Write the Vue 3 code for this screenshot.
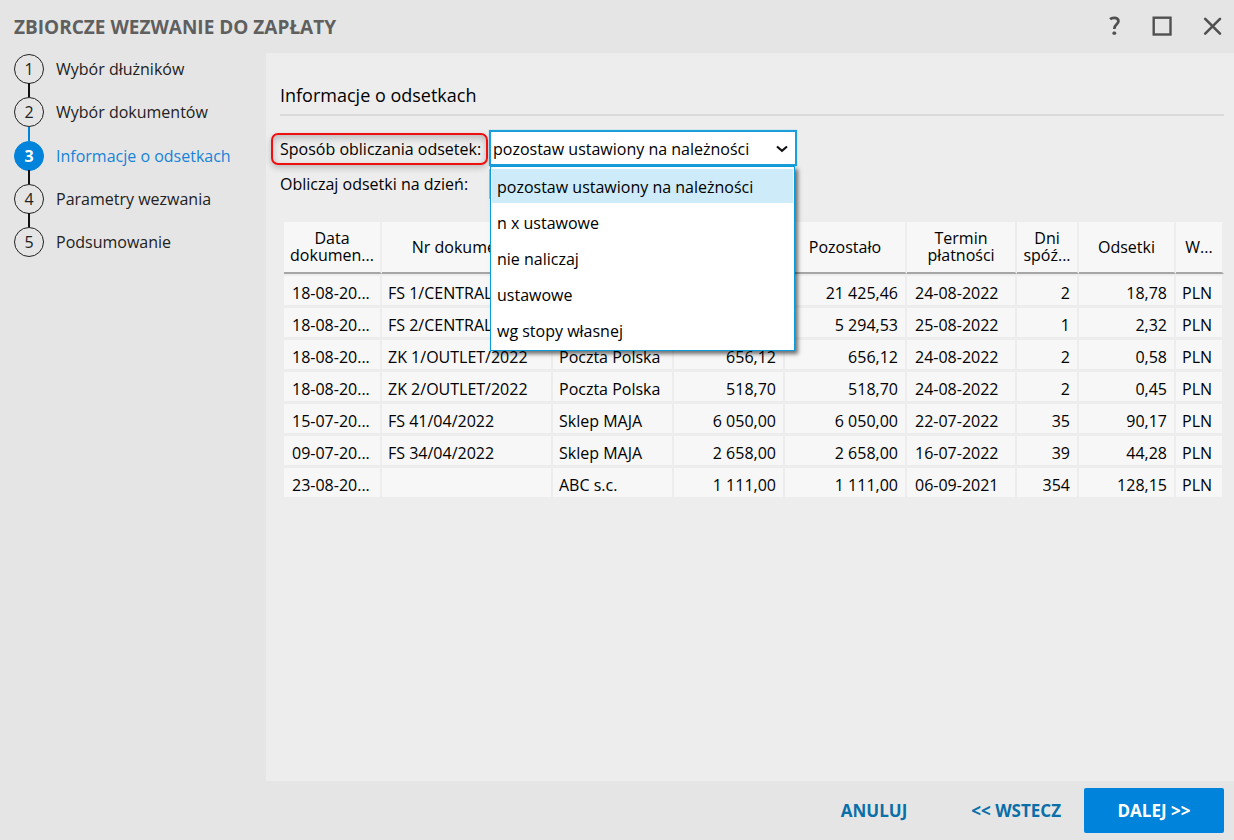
<script setup>
import { ref } from 'vue'

const steps = ['Wybór dłużników', 'Wybór dokumentów', 'Informacje o odsetkach', 'Parametry wezwania', 'Podsumowanie']
const active = 2

const options = ['pozostaw ustawiony na należności', 'n x ustawowe', 'nie naliczaj', 'ustawowe', 'wg stopy własnej']
const method = ref(options[0])
const open = ref(true)

function choose(option) {
  method.value = option
  open.value = false
}

const columns = [
  { key: 'date', title: ['Data', 'dokumen...'], kind: 'date' },
  { key: 'number', title: ['Nr dokumentu'] },
  { key: 'client', title: [] },
  { key: 'value', title: [], kind: 'num' },
  { key: 'left', title: ['Pozostało'], kind: 'num' },
  { key: 'due', title: ['Termin', 'płatności'], kind: 'date' },
  { key: 'days', title: ['Dni', 'spóź...'], kind: 'num' },
  { key: 'interest', title: ['Odsetki'], kind: 'num' },
  { key: 'currency', title: ['W...'] }
]

const rows = [
  { date: '18-08-20...', number: 'FS 1/CENTRALA', client: '', value: '', left: '21 425,46', due: '24-08-2022', days: '2', interest: '18,78', currency: 'PLN' },
  { date: '18-08-20...', number: 'FS 2/CENTRALA', client: '', value: '', left: '5 294,53', due: '25-08-2022', days: '1', interest: '2,32', currency: 'PLN' },
  { date: '18-08-20...', number: 'ZK 1/OUTLET/2022', client: 'Poczta Polska', value: '656,12', left: '656,12', due: '24-08-2022', days: '2', interest: '0,58', currency: 'PLN' },
  { date: '18-08-20...', number: 'ZK 2/OUTLET/2022', client: 'Poczta Polska', value: '518,70', left: '518,70', due: '24-08-2022', days: '2', interest: '0,45', currency: 'PLN' },
  { date: '15-07-20...', number: 'FS 41/04/2022', client: 'Sklep MAJA', value: '6 050,00', left: '6 050,00', due: '22-07-2022', days: '35', interest: '90,17', currency: 'PLN' },
  { date: '09-07-20...', number: 'FS 34/04/2022', client: 'Sklep MAJA', value: '2 658,00', left: '2 658,00', due: '16-07-2022', days: '39', interest: '44,28', currency: 'PLN' },
  { date: '23-08-20...', number: '', client: 'ABC s.c.', value: '1 111,00', left: '1 111,00', due: '06-09-2021', days: '354', interest: '128,15', currency: 'PLN' }
]
</script>

<template>
  <div class="window">
    <header class="titlebar">
      <h1>ZBIORCZE WEZWANIE DO ZAPŁATY</h1>
      <div class="window-buttons">
        <button type="button" aria-label="Pomoc">
          <svg width="20" height="20" viewBox="0 0 20 20" fill="none" stroke="#505050" stroke-width="2.8">
            <path d="M8.1 3.2C9.9 1.5 16.4 0.9 16.4 5.2C16.4 8.4 12.3 8.2 12.3 13" />
            <path d="M10.3 17.2C10.3 14.9 14.3 14.9 14.3 17.2C14.3 19.4 10.3 19.4 10.3 17.2Z" fill="#505050" stroke="none" />
          </svg>
        </button>
        <button type="button" aria-label="Maksymalizuj">
          <svg width="20" height="20" viewBox="0 0 20 20" fill="none" stroke="#505050" stroke-width="2.4">
            <rect x="1.7" y="1.7" width="16.8" height="16.8" />
          </svg>
        </button>
        <button type="button" aria-label="Zamknij">
          <svg width="20" height="20" viewBox="0 0 20 20" fill="none" stroke="#505050" stroke-width="2.6" stroke-linecap="round">
            <path d="M3.2 2.9L18 17.7M18 2.9L3.2 17.7" />
          </svg>
        </button>
      </div>
    </header>

    <div class="body">
      <nav class="sidebar" aria-label="Kroki">
        <ol class="steps">
          <li v-for="(step, i) in steps" :key="step" :class="{ active: i === active }">
            <span class="circle">{{ i + 1 }}</span>
            <span>{{ step }}</span>
          </li>
        </ol>
      </nav>

      <main class="content">
        <h2>Informacje o odsetkach</h2>
        <form class="form" @submit.prevent>
          <label class="marked" for="method">Sposób obliczania odsetek:</label>
          <div class="combo">
            <select id="method" v-model="method" @mousedown.prevent="open = !open">
              <option v-for="option in options" :key="option">{{ option }}</option>
            </select>
            <svg class="chevron" width="12" height="8" viewBox="0 0 12 8" fill="none" stroke="#111" stroke-width="2.2">
              <path d="M1 1.5L6 5.8L11 1.5" />
            </svg>
            <ul v-if="open" class="menu" role="listbox" aria-label="Sposób obliczania odsetek">
              <li
                v-for="option in options"
                :key="option"
                role="option"
                :aria-selected="option === method"
                :class="{ selected: option === method }"
                @click="choose(option)"
              >{{ option }}</li>
            </ul>
          </div>
          <label class="plain" for="day">Obliczaj odsetki na dzień:</label>
          <input id="day" class="day" type="text" />
        </form>

        <table>
          <colgroup>
            <col v-for="c in columns" :key="c.key" :class="'col-' + c.key" />
          </colgroup>
          <thead>
            <tr>
              <th v-for="c in columns" :key="c.key" scope="col">
                <div v-for="line in c.title" :key="line">{{ line }}</div>
              </th>
            </tr>
          </thead>
          <tbody>
            <tr v-for="(row, i) in rows" :key="i">
              <td v-for="c in columns" :key="c.key" :class="c.kind">{{ row[c.key] }}</td>
            </tr>
          </tbody>
        </table>
      </main>
    </div>

    <footer class="actions">
      <button type="button" class="link">ANULUJ</button>
      <button type="button" class="link back">&lt;&lt; WSTECZ</button>
      <button type="button" class="primary">DALEJ &gt;&gt;</button>
    </footer>
  </div>
</template>

<style>
body {
  margin: 0;
}
</style>

<style scoped>
.window {
  display: flex;
  flex-direction: column;
  min-height: 100vh;
  box-sizing: border-box;
  background: #e5e5e5;
  color: #000;
  font: 16px/20px "Open Sans", "Noto Sans", sans-serif;
}

button,
input,
select {
  font: inherit;
  color: inherit;
}

.titlebar {
  display: flex;
  align-items: center;
  justify-content: space-between;
  height: 53px;
  padding: 0 12px 0 14px;
}

h1 {
  margin: 0;
  color: #5f5f5f;
  font-size: 19px;
  line-height: 24px;
  font-weight: 700;
}

.window-buttons {
  display: flex;
  gap: 30px;
  padding-bottom: 2px;
}

.window-buttons button {
  display: flex;
  padding: 0;
  border: 0;
  background: none;
}

.body {
  display: flex;
  flex: 1;
}

.sidebar {
  flex: 0 0 266px;
}

.steps {
  display: flex;
  flex-direction: column;
  justify-content: space-between;
  height: 203px;
  margin: 1px 0 0 14px;
  padding: 0;
  list-style: none;
}

.steps li {
  position: relative;
  display: flex;
  align-items: center;
  gap: 12px;
  height: 30px;
  color: #222;
}

.steps li + li::before {
  content: "";
  position: absolute;
  left: 14px;
  bottom: 100%;
  width: 2px;
  height: 14px;
  background: #111;
}

.circle {
  display: flex;
  align-items: center;
  justify-content: center;
  box-sizing: border-box;
  width: 30px;
  height: 30px;
  border: 1px solid #222;
  border-radius: 50%;
}

.steps li.active {
  color: #1583d8;
}

.steps li.active::before {
  background: #0083da;
}

.active .circle {
  border-color: #0083da;
  background: #0083da;
  color: #fff;
  font-weight: 700;
}

.content {
  flex: 1;
  min-width: 0;
  padding: 30px 10px 24px 14px;
  background: #ededed;
}

h2 {
  margin: 0;
  padding-bottom: 7px;
  border-bottom: 2px solid #dadada;
  font-size: 18px;
  line-height: 24px;
  font-weight: 400;
}

.form {
  display: grid;
  grid-template-columns: 209px 308px;
  grid-template-rows: 36px 36px;
  align-items: center;
  margin-top: 14px;
}

.marked {
  box-sizing: border-box;
  width: 217px;
  height: 32px;
  margin: 1px 0 0 -9px;
  padding-left: 7px;
  border: 2px solid #f00f0f;
  border-radius: 7px;
  box-shadow: 0 3px 6px rgba(0, 0, 0, 0.2), inset 0 3px 7px rgba(0, 0, 0, 0.22);
  line-height: 28px;
  white-space: nowrap;
}

.plain {
  white-space: nowrap;
}

.combo {
  position: relative;
}

select {
  display: block;
  box-sizing: border-box;
  width: 100%;
  height: 36px;
  padding: 2px 32px 0 2px;
  border: 2px solid #1a9fdb;
  border-radius: 0;
  outline: 0;
  box-shadow: 0 0 1px #5cbfea;
  background: #fff;
  appearance: none;
}

.chevron {
  position: absolute;
  right: 9px;
  top: 15px;
  pointer-events: none;
}

.menu {
  position: absolute;
  z-index: 1;
  top: 36px;
  left: 1px;
  right: 2px;
  display: flex;
  flex-direction: column;
  gap: 2px;
  box-sizing: border-box;
  margin: 0;
  padding: 2px 1px 3px;
  border: 1px solid #0a9bdc;
  background: #fff;
  box-shadow: 3px 3px 4px rgba(0, 0, 0, 0.55);
  list-style: none;
}

.menu li {
  height: 34px;
  padding-left: 5px;
  line-height: 36px;
}

.menu .selected {
  background: #cdebf8;
}

.day {
  box-sizing: border-box;
  width: 160px;
  height: 30px;
  border: 1px solid #b5b5b5;
  background: #fff;
}

table {
  width: calc(100% - 4px);
  margin: 20px 0 0 4px;
  border-collapse: separate;
  border-spacing: 0;
  table-layout: fixed;
}

.col-date { width: 98px; }
.col-number { width: 171px; }
.col-value { width: 111px; }
.col-left { width: 122px; }
.col-due { width: 110px; }
.col-days { width: 62px; }
.col-interest { width: 97px; }
.col-currency { width: 48px; }

th,
td {
  box-sizing: border-box;
  overflow: hidden;
  border-right: 2px solid #ededed;
  background: #f7f7f7;
  font-weight: 400;
  white-space: nowrap;
}

th {
  height: 52px;
  padding: 0;
  border-bottom: 2px solid #a6a6a6;
  line-height: 17px;
  text-align: center;
}

td {
  height: 32px;
  padding: 4px 7px 0 6px;
  border-top: 2px solid #ededed;
  border-bottom: 1px solid #ededed;
}

.date {
  padding-left: 8px;
}

.num {
  text-align: right;
}

.actions {
  display: flex;
  align-items: center;
  justify-content: flex-end;
  height: 59px;
  padding-right: 10px;
}

.actions button {
  height: 45px;
  padding: 0;
  border: 0;
  background: none;
  font-size: 17px;
  font-weight: 700;
}

.actions .link {
  color: #0a6fa8;
}

.actions .back {
  margin: 0 23px 0 64px;
}

.actions .primary {
  width: 140px;
  border-radius: 2px;
  background: #0083da;
  color: #fff;
}
</style>
